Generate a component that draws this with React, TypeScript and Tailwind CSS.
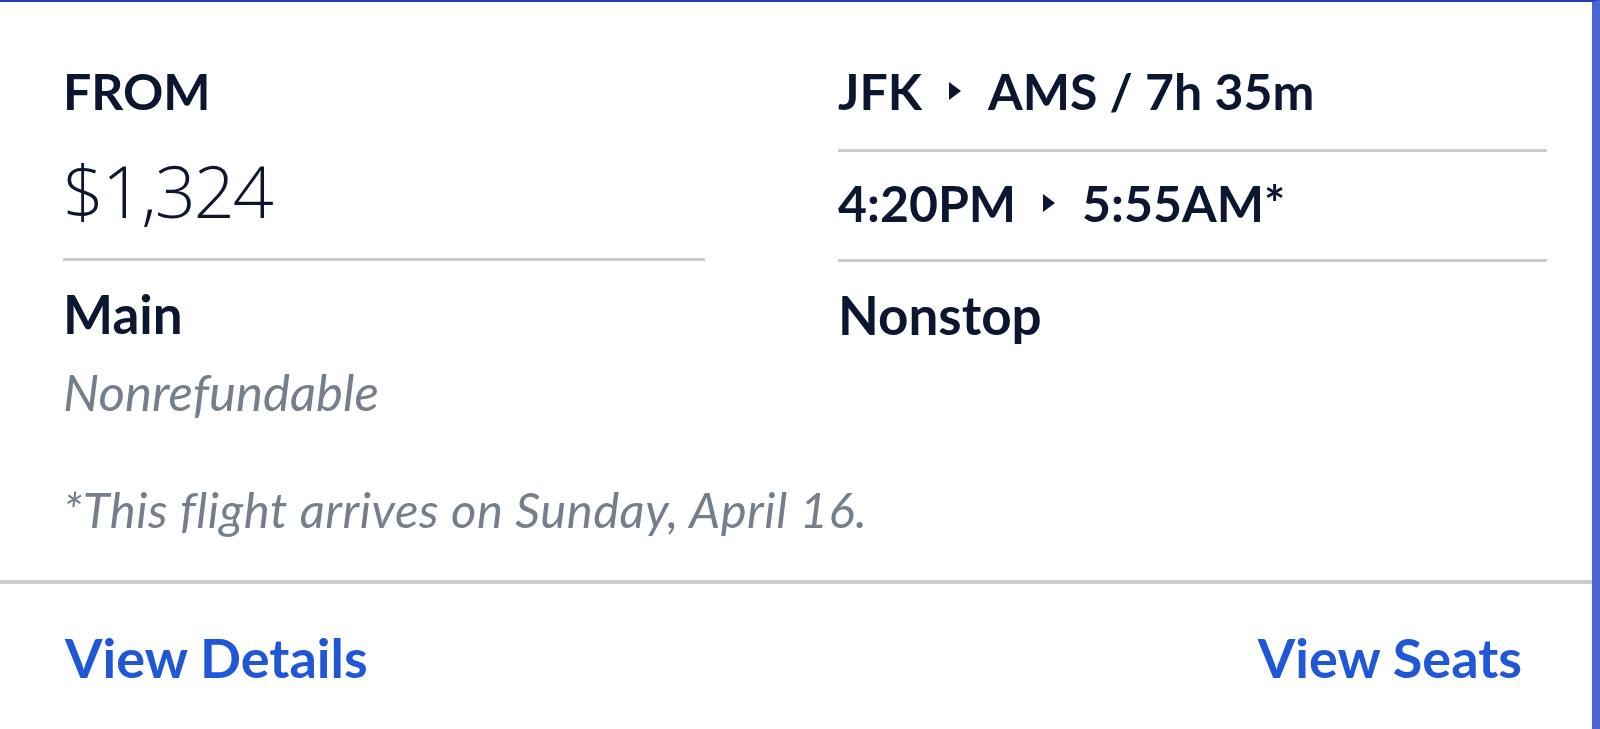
export default function App() {
  const Caret = () => (
    <svg width="12" height="18" viewBox="0 0 12 18" className="mx-[27px] shrink-0">
      <path d="M0 0 L12 9 L0 18 Z" fill="#0c1631" />
    </svg>
  );

  return (
    <div className="w-[1600px] h-[729px] bg-white font-['Lato',sans-serif] text-[#0c1631] overflow-hidden">
      <div className="h-full border-t-2 border-r-8 border-t-[#2a3ab5] border-r-[#4a64d4] flex flex-col">
        {/* Fare + flight info */}
        <div className="flex pl-[63px] pt-[64px] gap-[133px]">
          {/* Left column */}
          <div className="w-[642px] flex flex-col">
            <div className="text-[50px] leading-none font-bold">FROM</div>
            <div className="mt-[38px] text-[72px] leading-none font-light font-['Open_Sans',sans-serif] tracking-[-2px]">
              $1,324
            </div>
            <div className="mt-[32px] h-[3px] bg-[#cccccc]" />
            <div className="mt-[26px] text-[53px] leading-none font-bold">Main</div>
            <div className="mt-[26px] text-[51px] leading-none italic text-[#757f8c]">Nonrefundable</div>
            <div className="mt-[68px] text-[49px] leading-none italic text-[#757f8c] whitespace-nowrap tracking-[0.5px]">
              *This flight arrives on Sunday, April 16.
            </div>
          </div>

          {/* Right column */}
          <div className="w-[709px] flex flex-col">
            <div className="flex items-center text-[50px] leading-none font-bold">
              <span>JFK</span>
              <Caret />
              <span>AMS / 7h 35m</span>
            </div>
            <div className="mt-[33px] h-[3px] bg-[#cccccc]" />
            <div className="mt-[26px] flex items-center text-[50px] leading-none font-bold">
              <span>4:20PM</span>
              <Caret />
              <span>5:55AM*</span>
            </div>
            <div className="mt-[31px] h-[3px] bg-[#cccccc]" />
            <div className="mt-[26px] text-[53px] leading-none font-bold">Nonstop</div>
          </div>
        </div>

        <div className="mt-[46px] h-[4px] shrink-0 bg-[#cccccc]" />

        {/* Actions */}
        <div className="flex justify-between pl-[65px] pr-[70px] pt-[47px]">
          <button className="text-[54px] leading-none font-bold text-[#1f57d6]">View Details</button>
          <button className="text-[54px] leading-none font-bold text-[#1f57d6]">View Seats</button>
        </div>
      </div>
    </div>
  );
}
